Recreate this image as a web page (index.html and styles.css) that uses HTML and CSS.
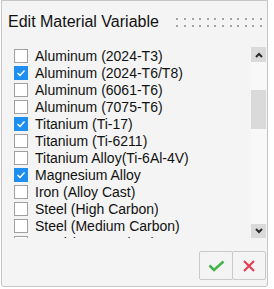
FILE: index.html
```html
<!DOCTYPE html>
<html lang="en">
<head>
    <meta charset="UTF-8">
    <title>Edit Material Variable</title>
    <link rel="stylesheet" href="styles.css">
</head>
<body>
    <div class="panel">
        <div class="header">
            <span class="title">Edit Material Variable</span>
            <div class="grip">
                <i></i><i></i><i></i><i></i><i></i><i></i><i></i><i></i><i></i><i></i><i></i><i></i>
                <i></i><i></i><i></i><i></i><i></i><i></i><i></i><i></i><i></i><i></i><i></i><i></i>
            </div>
        </div>
        <div class="listbox">
            <ul class="items">
                <li><span class="box"></span>Aluminum (2024-T3)</li>
                <li><span class="box on"><svg width="12" height="12" viewBox="0 0 12 12"><polyline points="2.5,6 5,8.5 9.5,3.5" /></svg></span>Aluminum (2024-T6/T8)</li>
                <li><span class="box"></span>Aluminum (6061-T6)</li>
                <li><span class="box"></span>Aluminum (7075-T6)</li>
                <li><span class="box on"><svg width="12" height="12" viewBox="0 0 12 12"><polyline points="2.5,6 5,8.5 9.5,3.5" /></svg></span>Titanium (Ti-17)</li>
                <li><span class="box"></span>Titanium (Ti-6211)</li>
                <li><span class="box"></span>Titanium Alloy(Ti-6Al-4V)</li>
                <li><span class="box on"><svg width="12" height="12" viewBox="0 0 12 12"><polyline points="2.5,6 5,8.5 9.5,3.5" /></svg></span>Magnesium Alloy</li>
                <li><span class="box"></span>Iron (Alloy Cast)</li>
                <li><span class="box"></span>Steel (High Carbon)</li>
                <li><span class="box"></span>Steel (Medium Carbon)</li>
                <li><span class="box"></span>Steel (Low Carbon)</li>
            </ul>
            <div class="scrollbar">
                <div class="arrow up"><svg width="8" height="6" viewBox="0 0 8 6"><polyline points="1,5 4,2 7,5" /></svg></div>
                <div class="track"><div class="thumb"></div></div>
                <div class="arrow down"><svg width="8" height="6" viewBox="0 0 8 6"><polyline points="1,1 4,4 7,1" /></svg></div>
            </div>
        </div>
        <div class="actions">
            <button class="ok" title="Apply"><svg width="17" height="12" viewBox="0 0 17 12"><polyline points="1.5,5.5 6,10 15.5,1.5" /></svg></button>
            <button class="cancel" title="Cancel"><svg width="12" height="12" viewBox="0 0 12 12"><path d="M1,1 L11,11 M11,1 L1,11" /></svg></button>
        </div>
    </div>
</body>
</html>
```

FILE: styles.css
```css
body { margin: 0; background: #fff; font-family: "Liberation Sans", Arial, sans-serif; color: #111; }

.panel {
    box-sizing: border-box; width: 267px; height: 287px; margin-left: 1px;
    border: 1px solid #c6c6c6; border-radius: 0 0 3px 3px; background: #f4f4f4;
    padding: 12px 1px 6px 12px; display: flex; flex-direction: column;
}

.header { display: flex; align-items: flex-start; margin-left: -6px; height: 18px; }
.title { font-size: 16px; line-height: 18px; color: #111; }
.grip {
    margin: 5px 4px 0 auto; display: grid; grid-template-columns: repeat(12, 2px);
    column-gap: 5.6px; row-gap: 5px;
}
.grip i { display: block; width: 2px; height: 2px; background: #a3a3a3; }

.listbox { display: flex; height: 191px; margin-top: 16px; }
.items { flex: 1; overflow: hidden; list-style: none; margin: 0; padding: 0; }
.items li { height: 17px; display: flex; align-items: center; gap: 7px; font-size: 14px; white-space: nowrap; }
.box { box-sizing: border-box; width: 14px; height: 14px; flex: none; border: 1px solid #a0a0a0; background: #fff; }
.box.on { background: #1e8ff0; border-color: #1e8ff0; display: grid; place-items: center; }
.box svg polyline { fill: none; stroke: #fff; stroke-width: 1.4; }

.scrollbar { width: 15px; display: flex; flex-direction: column; }
.arrow { background: #dadada; display: grid; place-items: center; }
.arrow.up { height: 15px; }
.arrow.down { height: 14px; }
.arrow svg polyline { fill: none; stroke: #2a2a2a; stroke-width: 2; }
.track { flex: 1; background: #f8f8f8; padding-top: 28px; }
.thumb { height: 39px; background: #dadada; }

.actions { display: flex; justify-content: flex-end; margin-top: 13px; }
.actions button {
    width: 34px; height: 29px; padding: 0; border: 1px solid #c9c9c9; border-radius: 2px;
    background: #f4f4f4; display: grid; place-items: center; cursor: pointer;
}
.actions .cancel { margin-left: -1px; }
.ok svg polyline { fill: none; stroke: #45b54b; stroke-width: 2.6; }
.cancel svg path { fill: none; stroke: #e6394f; stroke-width: 2; }
```
